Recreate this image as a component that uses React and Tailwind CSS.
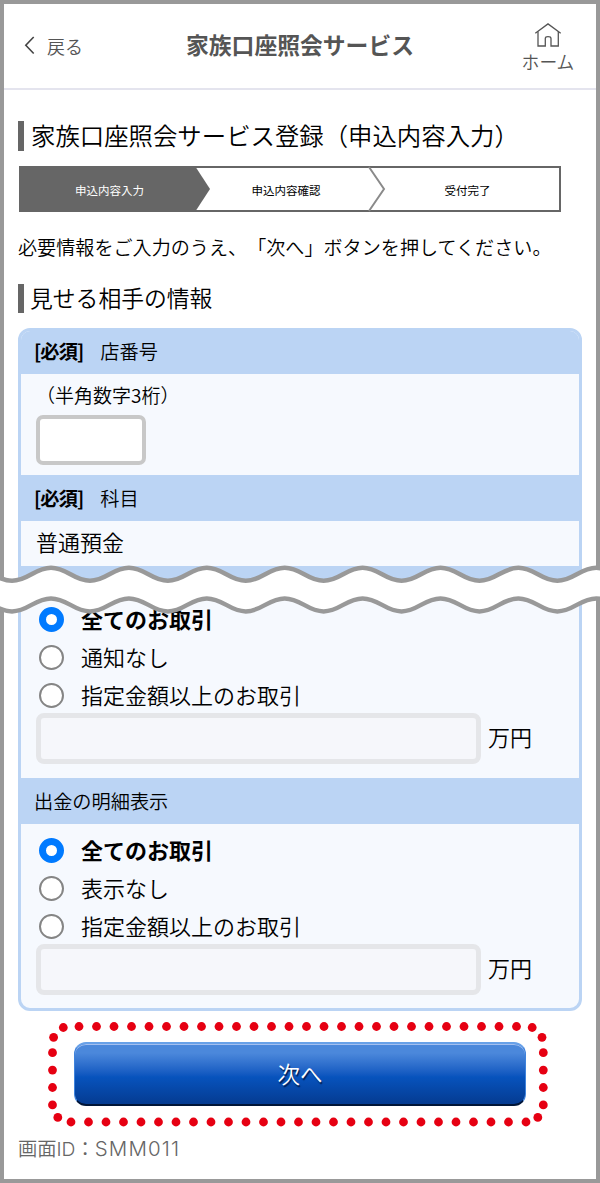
import React, { useState } from 'react';

const WAVE_PERIOD = 77.9;
const RED = '#e60012';

// Smooth wave from left to right, crest at y, trough 13px below
const wavePoints = (y) => {
  const half = WAVE_PERIOD / 2;
  let x = 51 - WAVE_PERIOD;
  let d = `M${x} ${y}`;
  for (let i = 0; i < 18; i++) {
    const from = i % 2 === 0 ? y : y + 13;
    const to = i % 2 === 0 ? y + 13 : y;
    d += ` C${x + 16} ${from} ${x + half - 16} ${to} ${x + half} ${to}`;
    x += half;
  }
  return d;
};

const WaveBreak = () => (
  <svg className="absolute left-0 top-[560px]" width="600" height="60" viewBox="0 560 600 60">
    <path d={wavePoints(583)} fill="none" stroke="#fff" strokeWidth="30" />
    <path d={wavePoints(567.8)} fill="none" stroke="#999" strokeWidth="4.5" />
    <path d={wavePoints(598.4)} fill="none" stroke="#999" strokeWidth="4.5" />
  </svg>
);

const DottedFrame = () => {
  const dots = [];
  for (let i = 0; i < 26; i++) dots.push([31 + i * 17.5, 6.5]);
  for (let i = 0; i < 27; i++) dots.push([23 + i * 17.5, 102]);
  for (let i = 0; i < 4; i++) {
    dots.push([4.5, 32.7 + i * 17.4]);
    dots.push([495.3, 32.7 + i * 17.4]);
  }
  dots.push([15.3, 7.5], [5.6, 17.3], [484.2, 7.5], [494, 17.3], [9.8, 97.4], [489.8, 97.4]);

  return (
    <svg className="absolute -left-[26px] -top-[22px]" width="500" height="108" viewBox="0 0 500 108">
      {dots.map(([x, y]) => (
        <circle key={`${x}-${y}`} cx={x} cy={y} r="4.4" fill={RED} />
      ))}
    </svg>
  );
};

const Header = () => (
  <header className="flex h-[86px] items-start justify-between border-b-2 border-[#e4e4ee] text-[#555]">
    <button className="ml-5 mt-[28px] flex w-[62px] items-center whitespace-nowrap text-[18px] leading-7">
      <svg className="mr-[8px] shrink-0" width="15" height="20" viewBox="0 0 15 20" fill="none" stroke="#444" strokeWidth="1.6">
        <path d="M9.7 1 L1.8 9.3 L9.7 17.5" />
      </svg>
      戻る
    </button>
    <h1 className="mr-[3px] mt-[25px] whitespace-nowrap text-[22.8px] font-bold leading-8">家族口座照会サービス</h1>
    <button className="mr-[17px] mt-[16px] flex w-[62px] flex-col items-center whitespace-nowrap text-[17.8px] leading-6">
      <svg className="mb-[1px]" width="28" height="28" viewBox="0 0 28 28" fill="none" stroke="#555" strokeWidth="1.3">
        <path d="M1.3 13.2 L14 3.9 L26.7 13.2" />
        <path d="M4 11.5 V26 H11.3 V18.5 Q11.3 16.7 14 16.7 Q17 16.7 17 18.5 V26 H24.3 V11.5" />
      </svg>
      ホーム
    </button>
  </header>
);

const Steps = () => (
  <div className="relative ml-[15px] mt-[15px] h-[46px] w-[542px] border-2 border-[#666] bg-white text-[11.5px] font-normal leading-[44px]">
    <svg className="absolute -left-[2px] -top-[2px]" width="542" height="46" viewBox="0 0 542 46">
      <path d="M0 0 H176 L191 23 L176 46 H0 Z" fill="#666" />
      <path d="M350 1 L365 23 L350 45" fill="none" stroke="#8a8a8a" strokeWidth="2" />
    </svg>
    <div className="relative grid h-full grid-cols-[177px_176px_187px] text-center">
      <span className="text-white">申込内容入力</span>
      <span>申込内容確認</span>
      <span>受付完了</span>
    </div>
  </div>
);

const RowHeader = ({ required, children }) => (
  <div className="flex h-[46px] items-center bg-[#bbd4f4] pl-[13px] text-[19.2px]">
    {required && <b className="mr-[17px] font-bold tracking-[-0.9px]">[必須]</b>}
    {children}
  </div>
);

const RadioGroup = ({ name }) => {
  const [selected, setSelected] = useState(0);
  const options = ['全てのお取引', name === 'notice' ? '通知なし' : '表示なし', '指定金額以上のお取引'];

  return (
    <div className="pl-[15px]">
      {options.map((option, i) => (
        <label key={option} className="flex h-[38px] items-center text-[22px] leading-[36px]">
          <input type="radio" name={name} className="sr-only" checked={selected === i} onChange={() => setSelected(i)} />
          <span
            className={
              selected === i
                ? 'ml-[3px] mr-[17px] h-[25px] w-[25px] rounded-full border-[7px] border-[#007aff] bg-white'
                : 'ml-[3px] mr-[17px] h-[25px] w-[25px] rounded-full border-2 border-[#858585] bg-white'
            }
          />
          <span className={selected === i ? '-mt-[2px] font-bold' : '-mt-[2px]'}>{option}</span>
        </label>
      ))}
      <div className="-mt-px flex items-center text-[22px]">
        <input disabled className="mr-[7px] h-[51px] w-[445px] rounded-[8px] border-[5px] border-[#e5e6e9] bg-[#f6f7fb]" />
        <span className="-mt-[4px]">万円</span>
      </div>
    </div>
  );
};

export default function App() {
  return (
    <div className="relative h-[1183px] w-[600px] overflow-hidden font-['Noto_Sans_CJK_JP',sans-serif]">
      <div className="h-full border-4 border-[#999] bg-white font-[350] text-black">
        <Header />

        <main>
          <h2 className="ml-[14px] mt-[31px] flex h-[30px] items-center whitespace-nowrap border-l-[6px] border-[#666] pb-[2px] pl-[7px] text-[24.4px]">
            家族口座照会サービス登録（申込内容入力）
          </h2>
          <Steps />
          <p className="ml-[14px] mt-[21px] whitespace-nowrap text-[19.1px] leading-7 [text-spacing-trim:space-all]">
            必要情報をご入力のうえ、「次へ」ボタンを押してください。
          </p>
          <h3 className="ml-[14px] mt-[23px] flex h-[29px] items-center border-l-[6px] border-[#666] pb-px pl-[6px] text-[22.8px]">
            見せる相手の情報
          </h3>

          {/* Form table */}
          <section className="ml-[14px] mt-[15px] h-[683px] w-[564px] overflow-hidden rounded-[12px] border-[3px] border-[#bbd4f4] bg-[#f6f9fe]">
            <div className="-mt-[3px]">
              <RowHeader required>店番号</RowHeader>
            </div>
            <div className="h-[101px] pl-[15px] pt-[6px]">
              <p className="text-[19px] leading-[30px] [text-spacing-trim:space-all]">（半角数字3桁）</p>
              <input className="mt-[5px] block h-[50px] w-[110px] rounded-[7px] border-[4px] border-[#c8c8c8] bg-white" />
            </div>
            <RowHeader required>科目</RowHeader>
            <div className="h-[45px] pl-[15px] text-[22px] leading-[41px]">普通預金</div>
            <div className="h-[34px] bg-[#bbd4f4]" />
            <div className="h-[178px]">
              <RadioGroup name="notice" />
            </div>
            <RowHeader>出金の明細表示</RowHeader>
            <div className="pt-[7px]">
              <RadioGroup name="detail" />
            </div>
          </section>

          {/* Submit */}
          <div className="relative ml-[70px] mt-[31px] h-[64px] w-[452px]">
            <DottedFrame />
            <button className="relative h-full w-full rounded-[12px] border border-y-2 border-[#3f83dc] border-b-[#001538] border-t-[#68a1e8] bg-linear-to-b from-[#4b88db] from-15% via-[#0753bd] via-55% to-[#053b91] text-[22.5px] text-white shadow-[inset_0_1px_0_#a3bff0] [text-shadow:1px_2px_1px_#001f50]">
              次へ
            </button>
          </div>
          <p className="ml-[14px] mt-[28px] text-[19.3px] leading-7 text-[#666]">
            画面<span className="font-['Inter'] font-light">ID</span>：
            <span className="font-['Inter'] text-[20.5px] font-light tracking-[1.1px]">SMM011</span>
          </p>
        </main>
      </div>

      <WaveBreak />
    </div>
  );
}
